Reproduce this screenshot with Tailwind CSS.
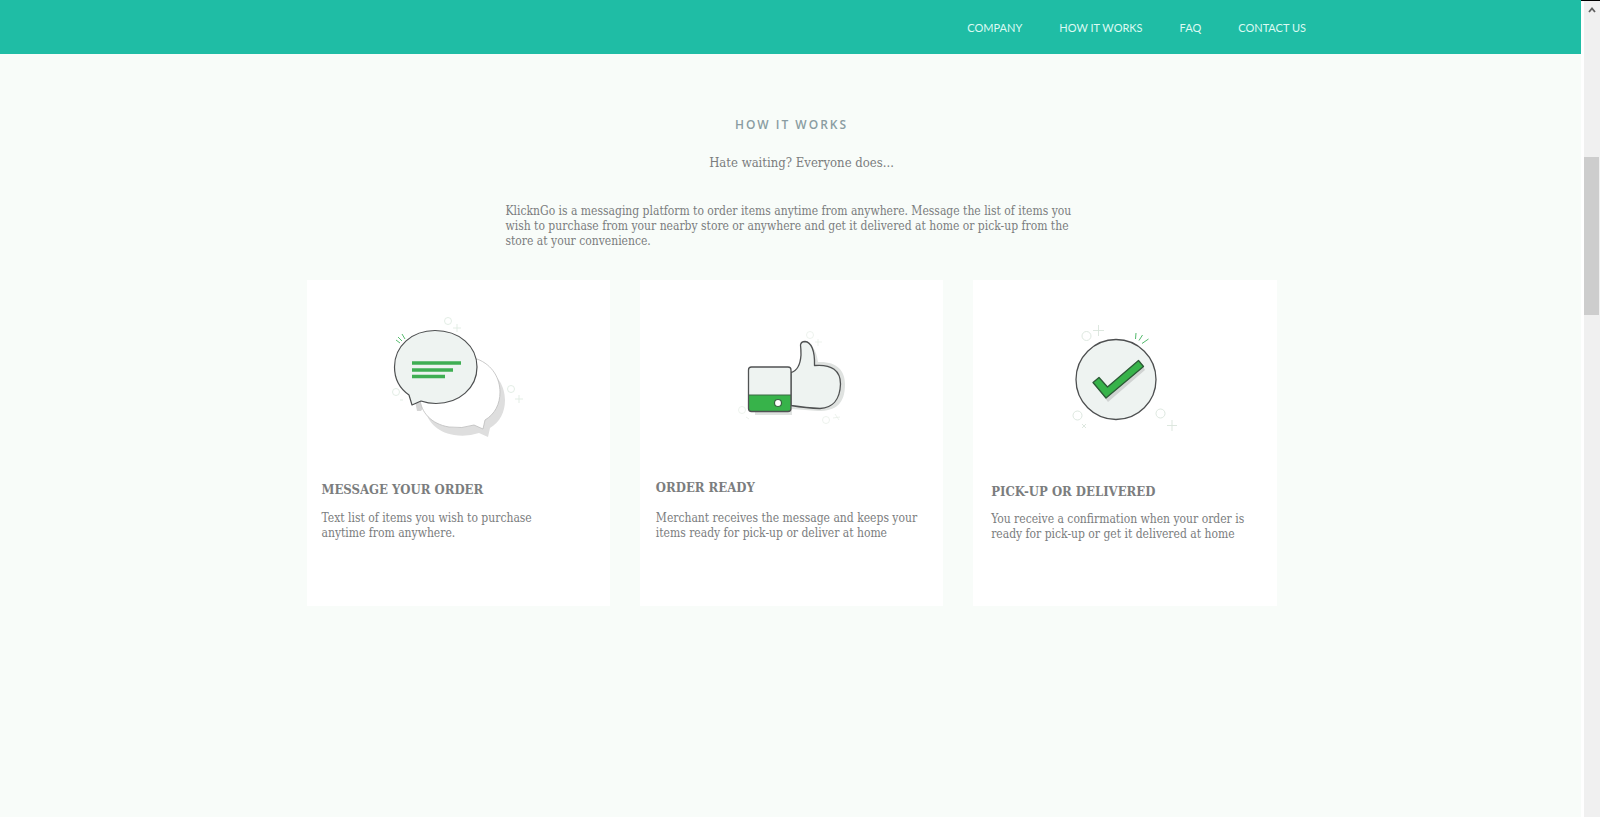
<!DOCTYPE html>
<html lang="en">
<head>
<meta charset="utf-8">
<title>KlicknGo – How it works</title>
<meta name="viewport" content="width=device-width, initial-scale=1">
<script src="https://cdn.jsdelivr.net/npm/@tailwindcss/browser@4"></script>
</head>
<body class="flex min-h-screen bg-[#f8fcf9] font-['DejaVu_Serif_Condensed','DejaVu_Serif',serif] text-xs leading-[15px] text-[#7b7d7e]">
  <div class="min-w-0 flex-1">
    <header class="flex h-[54px] items-center justify-end bg-[#1fbda5] pt-0.5 pr-[275px]">
      <nav class="flex gap-[37px] font-['Lato',sans-serif] text-[11px] leading-4 text-[#dcfaf3]">
        <a href="#company">COMPANY</a>
        <a href="#how">HOW IT WORKS</a>
        <a href="#faq">FAQ</a>
        <a href="#contact">CONTACT US</a>
      </nav>
    </header>

    <main id="how" class="mx-auto w-full max-w-[972px] pt-[61px] pl-0.5">
      <h1 class="text-center font-['Open_Sans',sans-serif] text-xs font-semibold leading-5 tracking-[2px] text-[#8a9ca2]">HOW IT WORKS</h1>
      <p class="mt-[18px] pl-5 text-center text-[13px] leading-5">Hate waiting? Everyone does...</p>
      <p class="mt-[31px] pr-[188px] pl-[199px]">KlicknGo is a messaging platform to order items anytime from anywhere. Message the list of items you wish to purchase from your nearby store or anywhere and get it delivered at home or pick-up from the store at your convenience.</p>

      <div class="mt-[31px] grid grid-cols-3 gap-[30px]">
        <article class="bg-white px-[15px] pt-5 pb-16">
          <svg class="mx-auto" width="160" height="150" viewBox="378 300 160 150" fill="none" aria-hidden="true">
            <path d="M477 359C493 365 500 379 500 392C500 404 495 414 485 420L483 429L474 425Q462 429 449 427C431 424 421 412 420 399Z" fill="#dedede" transform="translate(5 8)"/>
            <path d="M415 401L417 411L421 411L426 404Z" fill="#d5d5d5"/>
            <path d="M477 359C493 365 500 379 500 392C500 404 495 414 485 420L483 429L474 425Q462 429 449 427C431 424 421 412 420 399Z" fill="#fff" stroke="#bcbcbc" stroke-width=".8"/>
            <path d="M409 395C399 388 394.500 378 394.500 367C394.500 346 412 330.500 435 330.500C459 330.500 477 346 477 367C477 388 459 403.500 436 403.500Q428 403.500 421 401L412 405Z" fill="#eef3f1" stroke="#4d4f50" stroke-width="1.200" stroke-linejoin="round"/>
            <path d="M412 363H461M412 370H453M412 376.500H445" stroke="#3fae53" stroke-width="3.500"/>
            <path d="M396 340L400 343M398 337L402 341M402 334L405 339" stroke="#58bd70"/>
            <g stroke="#e0ebe2" stroke-width=".9"><circle cx="448" cy="321" r="3.500"/><circle cx="396" cy="392" r="3.500"/><circle cx="511" cy="389" r="3.500"/><path d="M457 324V332M453 328H461M519 395V403M515 399H523M400 400H403"/></g>
          </svg>
          <h2 class="mt-[30px] text-[13px] leading-5 font-bold">MESSAGE YOUR ORDER</h2>
          <p class="mt-[11px] max-w-[240px]">Text list of items you wish to purchase anytime from anywhere.</p>
        </article>

        <article class="bg-white px-4 pt-5 pb-16">
          <svg class="mx-auto" width="160" height="150" viewBox="711 300 160 150" fill="none" aria-hidden="true">
            <path d="M803 344Q815 341 818 362C836 361 845 370 845 384C845 404 836 411 818 411L792 409V415H755V410H791Z" fill="#dfe2e0"/>
            <path d="M791 372.500Q800 370 801 355Q801 349 800.500 345Q801 341.500 805 341.500C811 342 815 350 814.500 365.500C832 364 840.500 371 840.500 384C840 400 832 408 820 408.500Q807 408 791 405.500Z" fill="#eef3f1" stroke="#505253" stroke-width="1.300" stroke-linejoin="round"/>
            <rect x="748.500" y="367" width="42.500" height="44.500" rx="3" fill="#eef3f1"/>
            <path d="M748.500 395H791V408.500Q791 411.500 788 411.500H751.500Q748.500 411.500 748.500 408.500Z" fill="#37b34a"/>
            <path d="M748.500 395H791" stroke="#3c6945"/>
            <rect x="748.500" y="367" width="42.500" height="44.500" rx="3" stroke="#505253" stroke-width="1.300"/>
            <circle cx="778" cy="403" r="3.500" fill="#fff" stroke="#37643f" stroke-width="1.200"/>
            <g stroke="#e9efe9" stroke-width=".8"><circle cx="810" cy="335" r="3.500"/><circle cx="742" cy="410" r="3.500"/><circle cx="826" cy="420" r="3.500"/><path d="M818 339V346M815 342H822M833 418L840 417M835 414L839 420M746 417L749 419"/></g>
          </svg>
          <h2 class="mt-[28px] text-[13px] leading-5 font-bold">ORDER READY</h2>
          <p class="mt-[13px]">Merchant receives the message and keeps your items ready for pick-up or deliver at home</p>
        </article>

        <article class="bg-white pl-[18px] pr-3 pt-5 pb-16">
          <svg class="mx-auto" width="160" height="150" viewBox="1048 300 160 150" fill="none" aria-hidden="true">
            <circle cx="1116" cy="379.500" r="40" fill="#eef3f1" stroke="#4d4f50" stroke-width="1.300"/>
            <path d="M1095 385L1100 381L1109 390L1142 364L1145 370L1108 402Z" fill="#d0d3d2"/>
            <path d="M1093 382.500L1099 377.500L1107.500 387L1138.500 360.500L1143.500 366.500L1106 398Z" fill="#37b34a" stroke="#2c5936" stroke-width="1.300" stroke-linejoin="round"/>
            <path d="M1136 333L1135.500 339M1142.500 335L1139 340.500M1148.500 339L1142 343.500" stroke="#52b96b"/>
            <g stroke="#d9e4db" stroke-width=".9"><circle cx="1086.500" cy="336" r="4.500"/><circle cx="1077.500" cy="415.500" r="4.500"/><circle cx="1160.500" cy="413.500" r="4.500"/><path d="M1098.500 325V336M1093 330.500H1104M1172 420V431M1167 425.500H1177M1082 424L1086 428M1086 424L1082 428"/></g>
          </svg>
          <h2 class="mt-[32px] text-[13px] leading-5 font-bold">PICK-UP OR DELIVERED</h2>
          <p class="mt-[10px]">You receive a confirmation when your order is ready for pick-up or get it delivered at home</p>
        </article>
      </div>
    </main>
  </div>

  <div class="w-[19px] shrink-0 border-t border-black bg-white pl-[3px]" aria-hidden="true">
    <div class="flex min-h-full flex-col bg-[#f0f0f0]">
      <svg class="mt-1 ml-1" width="8" height="10" viewBox="0 0 8 10" fill="none"><path d="M1 7L4 3.500L7 7" stroke="#606060" stroke-width="1.800"/></svg>
      <div class="mt-[142px] mr-px h-[158px] bg-[#cdcdcd]"></div>
    </div>
  </div>
</body>
</html>
